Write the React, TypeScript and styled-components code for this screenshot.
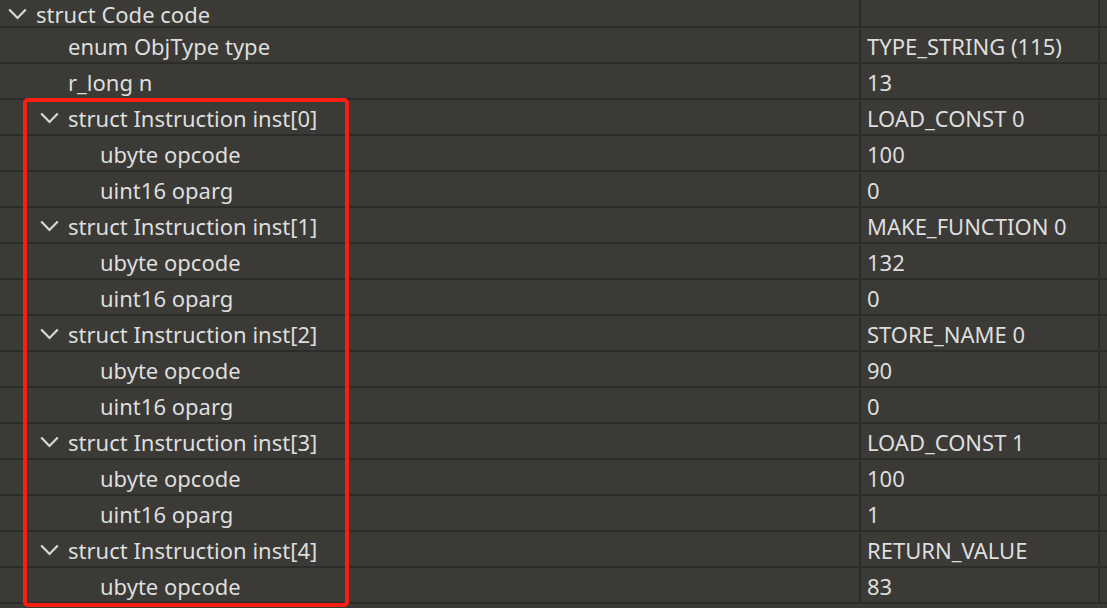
import React from "react";
import styled, { createGlobalStyle } from "styled-components";

const Global = createGlobalStyle`
  html, body { margin: 0; padding: 0; background: #3b3a36; overflow: hidden; }
  body { font-family: "Noto Sans", "Open Sans", sans-serif; }
`;

const Page = styled.div`
  position: relative;
  width: 1107px;
  height: 608px;
  overflow: hidden;
  background: #3b3a36;
`;

const Tree = styled.div`
  display: flex;
  flex-direction: column;
`;

const Row = styled.div<{ $first?: boolean }>`
  display: flex;
  height: ${(p) => (p.$first ? 28 : 36)}px;
  box-sizing: border-box;
  border-bottom: 2px solid #2c2c2a;
`;

const NameCell = styled.div<{ $level: number }>`
  width: 861px;
  box-sizing: border-box;
  border-right: 2px solid #2c2c2a;
  display: flex;
  align-items: center;
  padding-left: ${(p) => 8 + p.$level * 32}px;
  padding-top: 1px;
  color: #dedede;
  font-size: 22px;
  line-height: 24px;
  white-space: nowrap;
`;

const ValueCell = styled.div`
  width: 239px;
  box-sizing: border-box;
  border-right: 2px solid #2c2c2a;
  display: flex;
  align-items: center;
  padding-left: 6px;
  padding-top: 1px;
  color: #dedede;
  font-size: 22px;
  line-height: 24px;
  white-space: nowrap;
`;

const Filler = styled.div`
  flex: 1;
`;

const Toggle = styled.span`
  width: 28px;
  flex: none;
  display: inline-flex;
  align-items: center;
`;

const Spacer = styled.span`
  width: 28px;
  flex: none;
  display: inline-block;
`;

const Highlight = styled.div`
  position: absolute;
  left: 23px;
  top: 98px;
  width: 326px;
  height: 509px;
  box-sizing: border-box;
  border: 4px solid #fa1e12;
  border-radius: 5px;
  pointer-events: none;
`;

const Chevron = () => (
  <svg width="19" height="12" viewBox="0 0 19 12">
    <polyline points="1.2,1.5 9.5,10 17.8,1.5" fill="none" stroke="#d8d8d8" strokeWidth="2.2" />
  </svg>
);

type Item = { level: number; name: string; value: string; open?: boolean };

const items: Item[] = [
  { level: 0, name: "struct Code code", value: "", open: true },
  { level: 1, name: "enum ObjType type", value: "TYPE_STRING (115)" },
  { level: 1, name: "r_long n", value: "13" },
];
const ops: [string, string, string | null][] = [
  ["LOAD_CONST 0", "100", "0"],
  ["MAKE_FUNCTION 0", "132", "0"],
  ["STORE_NAME 0", "90", "0"],
  ["LOAD_CONST 1", "100", "1"],
  ["RETURN_VALUE", "83", null],
];
ops.forEach(([v, opc, arg], i) => {
  items.push({ level: 1, name: `struct Instruction inst[${i}]`, value: v, open: true });
  items.push({ level: 2, name: "ubyte opcode", value: opc });
  if (arg !== null) items.push({ level: 2, name: "uint16 oparg", value: arg });
});

export default function App() {
  return (
    <Page>
      <Global />
      <Tree>
        {items.map((it, i) => (
          <Row key={i} $first={i === 0}>
            <NameCell $level={it.level}>
              {it.open ? (
                <Toggle>
                  <Chevron />
                </Toggle>
              ) : (
                <Spacer />
              )}
              {it.name}
            </NameCell>
            <ValueCell>{it.value}</ValueCell>
            <Filler />
          </Row>
        ))}
      </Tree>
      <Highlight />
    </Page>
  );
}
